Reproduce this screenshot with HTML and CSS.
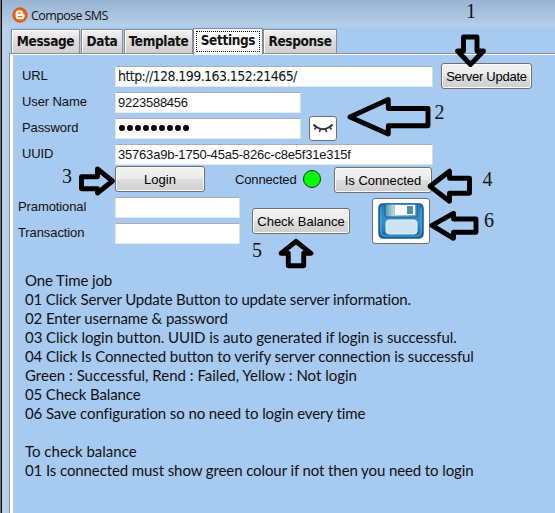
FILE: index.html
```html
<!DOCTYPE html>
<html lang="en">
<head>
<meta charset="utf-8">
<title>Compose SMS</title>
<link rel="stylesheet" href="styles.css">
</head>
<body>
<div class="window">
  <header class="titlebar">
    <svg class="logo" width="16" height="16" viewBox="0 0 16 16"><circle cx="8" cy="8" r="7.5" fill="#ef6510"/><circle cx="8" cy="8" r="7" fill="none" stroke="#cc5313"/><path d="M6.3 3.5H8.2Q11 3.5 11 6.2Q11 7.2 12 7.2Q12.5 7.2 12.5 8V9.2Q12.5 12.3 9.5 12.3H6.5Q3.7 12.3 3.7 9.3V6.3Q3.7 3.5 6.3 3.5Z" fill="#fff"/><path d="M6.3 6.2H8.2M6.3 9.7H9.7" stroke="#ef6510" stroke-width="1.3" stroke-linecap="round"/></svg>
    <span class="caption">Compose SMS</span>
  </header>
  <nav class="tabs">
    <span class="tab message"><b>Message</b></span>
    <span class="tab data"><b>Data</b></span>
    <span class="tab template"><b>Template</b></span>
    <span class="tab active"><b>Settings</b></span>
    <span class="tab response"><b>Response</b></span>
  </nav>
  <main class="panel">
    <div class="row">
      <span class="label url">URL</span><span class="field wide address"><span>http://128.199.163.152:21465/</span></span>
      <button class="btn update"><span>Server Update</span></button>
    </div>
    <div class="row"><span class="label user">User Name</span><span class="field medium"><span class="digits">9223588456</span></span></div>
    <div class="row">
      <span class="label">Password</span><span class="field medium"><span class="dots"><i></i><i></i><i></i><i></i><i></i><i></i><i></i><i></i><i></i></span></span>
      <button class="btn eye" aria-label="Show password"><svg width="22" height="14" viewBox="0 0 22 14"><path d="M4.5 6L2.5 8.5M8.5 8L7.5 11M13.5 8L14.5 11M17.5 6L19.5 8.5" fill="none" stroke="#333" stroke-width="1.6"/><path d="M1.5 3.5Q3 5 4.5 6Q11 10.5 17.5 6Q19 5 20.5 3.5" fill="none" stroke="#333" stroke-width="2"/></svg></button>
    </div>
    <div class="row"><span class="label uuid">UUID</span><span class="field wide"><span class="uuid-value">35763a9b-1750-45a5-826c-c8e5f31e315f</span></span></div>
    <div class="row actions">
      <button class="btn login"><span>Login</span></button>
      <span class="status">Connected</span><span class="lamp"></span>
      <button class="btn verify"><span>Is Connected</span></button>
    </div>
    <div class="balance">
      <div class="totals">
        <div class="row"><span class="label promo">Pramotional</span><span class="field small"></span></div>
        <div class="row"><span class="label trans">Transaction</span><span class="field small"></span></div>
      </div>
      <button class="btn check"><span>Check Balance</span></button>
      <button class="btn save" aria-label="Save"><svg width="46" height="36" viewBox="0 0 46 36">
        <defs><linearGradient id="disk" x2="0" y2="1"><stop stop-color="#2779b5"/><stop offset=".5" stop-color="#3591cd"/><stop offset="1" stop-color="#1767a5"/></linearGradient><linearGradient id="metal"><stop stop-color="#4f91b5"/><stop offset=".25" stop-color="#b5d5df"/><stop offset="1" stop-color="#6ca6c2"/></linearGradient></defs>
        <path d="M5 1H41Q45 1 45 6V30Q45 35 40 35H6Q1 35 1 30V5Q1 1 5 1Z" fill="url(#disk)" stroke="#155b97" stroke-width="1.5"/>
        <path d="M3 6V29Q3 33 7 33H39Q43 33 43 29V5" fill="none" stroke="#4fa7dc"/>
        <path d="M7 1H39V12Q39 14 37 14H9Q7 14 7 12Z" fill="url(#metal)" stroke="#195e91"/><path d="M17 2H37V12H17Z" fill="#fff"/><path d="M29 3H35V11H29Z" fill="#4d91b5"/>
        <rect x="8" y="17" width="31" height="14" rx="3" fill="#cfe2f3" stroke="#e2f2ff"/></svg></button>
    </div>
    <section class="help">
      <p class="h1">One Time job</p>
      <p class="h2">01 Click Server Update Button to update server information.</p>
      <p class="h3">02 Enter username &amp; password</p>
      <p class="h4">03 Click login button. UUID is auto generated if login is successful.</p>
      <p class="h5">04 Click Is Connected button to verify server connection is successful</p>
      <p class="h6">Green : Successful, Rend : Failed, Yellow : Not login</p>
      <p class="h7">05 Check Balance</p>
      <p class="h8">06 Save configuration so no need to login every time</p>
      <p>&nbsp;</p>
      <p class="h9">To check balance</p>
      <p class="h10">01 Is connected must show green colour if not then you need to login</p>
    </section>
  </main>
  <svg class="annotations" width="555" height="513" viewBox="0 0 555 513">
    <g class="arrows">
      <path d="M463.5 37H477V51H483.5L470.5 64.5L457.5 51H463.5Z"/>
      <path d="M350 117L388.3 99.5V108.5H428V125.7H388.3V134Z"/>
      <path d="M81.5 176.7H97.5V169L112.5 181L97.5 193V188.7H81.5Z"/>
      <path d="M430 186.3L449.5 171.2V178.3H469.5V193.3H449.5V201.3Z"/>
      <path d="M296 241.3L311 253.3H303.7V265.7H288.3V253.3H281Z"/>
      <path d="M432 225.3L453.5 213.3V219H476V232.3H453.5V238.3Z"/>
    </g>
    <g class="numbers">
      <text x="466" y="18">1</text><text x="434.5" y="119">2</text><text x="62" y="183">3</text><text x="482.5" y="186">4</text><text x="252" y="257">5</text><text x="484" y="227">6</text>
    </g>
  </svg>
</div>
</body>
</html>
```
FILE: styles.css
```css
* { box-sizing: border-box; }
body { margin: 0; overflow: hidden; font: 13px "Liberation Sans", sans-serif; color: #111; }
.window { position: relative; height: 513px; display: flex; flex-direction: column; background: linear-gradient(to right, #71777b 0 1px, #080808 1px 2px, #b9d1ea 2px 9px, #a6caf0 9px); }
.titlebar { height: 27px; margin-left: 2px; padding: 7px 0 0 10px; display: flex; align-items: flex-start; background: linear-gradient(#98b4d2, #b7d0ea); }
.caption { margin: 0 0 0 3px; font: 12.5px/18px "Open Sans", sans-serif; letter-spacing: -.6px; }
.tabs { display: flex; height: 27px; padding-left: 11px; align-items: flex-end; gap: 1px; position: relative; z-index: 1; }
.tab { height: 25px; display: flex; align-items: center; justify-content: center; border: 1px solid #898c95; background: linear-gradient(#f2f2f2, #ddd 50%, #cfcfcf); box-shadow: inset 1px 1px #fff; font: 13.5px "DejaVu Sans Condensed", sans-serif; white-space: nowrap; }
.tab b { letter-spacing: -.35px; margin-top: -1px; }
.message { width: 69px; }
.data { width: 42px; }
.template { width: 69px; }
.active { width: 70px; height: 27px; margin: 0 -1px -1px; background: #fff; outline: 1px dotted #111; outline-offset: -4px; border-bottom-color: #fff; }
.active b { margin-top: -4px; }
.response { width: 74px; }
.panel { flex: 1; margin: -1px 0 0 9px; border: solid #898c95; border-width: 1px 0 0 1px; box-shadow: inset 3px 1px #fff; padding: 9px 0 0 8px; background: #a6caf0; }
.row { display: flex; align-items: center; height: 26px; }
.label { width: 97px; padding: 0 0 1px 4px; white-space: nowrap; letter-spacing: -.1px; }
.field { height: 21px; padding-left: 2px; display: flex; align-items: center; background: #fff; border: 1px solid; border-color: #abadb3 #dbdfe6 #e3e9ef #e2e3ea; white-space: nowrap; overflow: hidden; }
.wide { width: 318px; }
.medium { width: 186px; }
.small { width: 125px; }
.address { font: 14px "DejaVu Sans Condensed", sans-serif; letter-spacing: -.57px; }
.digits { letter-spacing: -.25px; }
.uuid-value { letter-spacing: -.2px; }
.dots { display: flex; gap: 2px; padding-left: 1px; }
.dots i { width: 6px; height: 6px; border-radius: 50%; background: #000; }
.btn { height: 26px; padding: 0; border: 1px solid #707070; border-radius: 3px; background: linear-gradient(#f2f2f2, #ebebeb 50%, #ddd 50%, #cfcfcf); box-shadow: inset 0 0 0 1px #fcfcfc; font: 13px "Liberation Sans", sans-serif; color: #000; white-space: nowrap; flex: none; }
.update { width: 91px; margin-left: 8px; letter-spacing: -.25px; }
.eye { width: 28px; height: 25px; margin-left: 8px; background: #fff; }
.eye svg, .save svg { display: block; margin: auto; }
.actions { padding-left: 97px; margin-top: -1px; }
.login { width: 90px; }
.status { width: 68px; margin-left: 30px; letter-spacing: -.15px; }
.lamp { width: 18px; height: 18px; border: 1px solid #173817; border-radius: 50%; background: #0f0; }
.verify { width: 98px; margin: 2px 0 0 13px; }
.balance { display: flex; align-items: flex-start; }
.totals { padding-top: 2px; }
.promo, .trans { padding-left: 0; }
.check { width: 98px; margin: 16px 0 0 12px; }
.save { width: 58px; height: 46px; margin: 6px 0 0 22px; background: #fff; }
.help { margin: 25px 0 0 7px; font: 15px/19px Lato, sans-serif; font-variant-ligatures: none; white-space: nowrap; }
.help p { margin: 0; }
.h1 { letter-spacing: -.12px; }
.h2 { letter-spacing: -.17px; }
.h3 { letter-spacing: -.1px; }
.h4 { letter-spacing: -.06px; }
.h5 { letter-spacing: -.1px; }
.h7 { letter-spacing: -.13px; }
.h8 { letter-spacing: -.1px; }
.h10 { letter-spacing: -.1px; }
.annotations { position: absolute; inset: 0; z-index: 2; }
.arrows { fill: none; stroke: #000; stroke-width: 4.9; stroke-linejoin: round; }
.numbers { font: 20px "Liberation Serif", serif; fill: #111; }
```
